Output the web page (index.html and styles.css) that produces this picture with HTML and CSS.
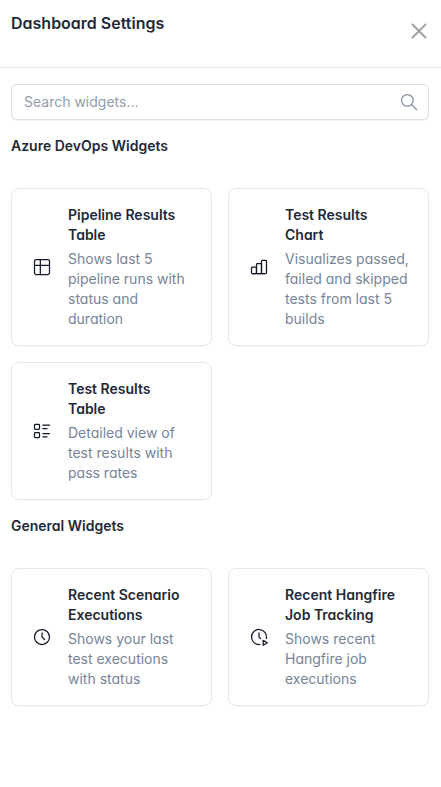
FILE: index.html
```html
<!DOCTYPE html>
<html lang="en">
<head>
<meta charset="utf-8">
<meta name="viewport" content="width=device-width, initial-scale=1">
<title>Dashboard Settings</title>
<link rel="stylesheet" href="styles.css">
</head>
<body>
<header class="header">
  <h1 class="title">Dashboard Settings</h1>
  <button class="close" type="button" aria-label="Close">
    <svg viewBox="0 0 16 16" width="16" height="16"><path d="M1.5 1.5l13 13M14.5 1.5l-13 13"/></svg>
  </button>
</header>
<main class="content">
  <div class="search">
    <input class="search-input" type="search" aria-label="Search widgets" placeholder="Search widgets...">
    <svg class="icon search-icon" viewBox="0 0 24 24"><path d="M3 10a7 7 0 1 0 14 0a7 7 0 1 0 -14 0"/><path d="M21 21l-6 -6"/></svg>
  </div>
  <section class="group">
    <h2 class="group-title">Azure DevOps Widgets</h2>
    <div class="cards">
      <button class="card" type="button">
        <svg class="icon" viewBox="0 0 24 24"><path d="M3 5a2 2 0 0 1 2 -2h14a2 2 0 0 1 2 2v14a2 2 0 0 1 -2 2h-14a2 2 0 0 1 -2 -2v-14z"/><path d="M3 10h18"/><path d="M10 3v18"/></svg>
        <span class="card-text"><strong class="card-title">Pipeline Results Table</strong><span class="card-desc">Shows last 5 pipeline runs with status and duration</span></span>
      </button>
      <button class="card" type="button">
        <svg class="icon" viewBox="0 0 24 24"><path d="M3 13a1 1 0 0 1 1 -1h4a1 1 0 0 1 1 1v6a1 1 0 0 1 -1 1h-4a1 1 0 0 1 -1 -1z"/><path d="M9 9a1 1 0 0 1 1 -1h4a1 1 0 0 1 1 1v10a1 1 0 0 1 -1 1h-4a1 1 0 0 1 -1 -1z"/><path d="M15 5a1 1 0 0 1 1 -1h4a1 1 0 0 1 1 1v14a1 1 0 0 1 -1 1h-4a1 1 0 0 1 -1 -1z"/><path d="M4 20h14"/></svg>
        <span class="card-text"><strong class="card-title">Test Results Chart</strong><span class="card-desc">Visualizes passed, failed and skipped tests from last 5 builds</span></span>
      </button>
      <button class="card" type="button">
        <svg class="icon" viewBox="0 0 24 24"><path d="M13 5h8"/><path d="M13 9h5"/><path d="M13 15h8"/><path d="M13 19h5"/><path d="M3 5a1 1 0 0 1 1 -1h4a1 1 0 0 1 1 1v4a1 1 0 0 1 -1 1h-4a1 1 0 0 1 -1 -1z"/><path d="M3 15a1 1 0 0 1 1 -1h4a1 1 0 0 1 1 1v4a1 1 0 0 1 -1 1h-4a1 1 0 0 1 -1 -1z"/></svg>
        <span class="card-text"><strong class="card-title">Test Results Table</strong><span class="card-desc">Detailed view of test results with pass rates</span></span>
      </button>
    </div>
  </section>
  <section class="group">
    <h2 class="group-title">General Widgets</h2>
    <div class="cards">
      <button class="card" type="button">
        <svg class="icon" viewBox="0 0 24 24"><path d="M3 12a9 9 0 1 0 18 0a9 9 0 0 0 -18 0"/><path d="M12 7v5l3 3"/></svg>
        <span class="card-text"><strong class="card-title">Recent Scenario Executions</strong><span class="card-desc">Shows your last test executions with status</span></span>
      </button>
      <button class="card" type="button">
        <svg class="icon" viewBox="0 0 24 24"><path d="M12 7v5l2 2"/><path d="M17 22l5 -3l-5 -3z"/><path d="M13.017 20.943a9 9 0 1 1 7.831 -7.292"/></svg>
        <span class="card-text"><strong class="card-title">Recent Hangfire Job Tracking</strong><span class="card-desc">Shows recent Hangfire job executions</span></span>
      </button>
    </div>
  </section>
</main>
</body>
</html>
```
FILE: styles.css
```css
* {
  box-sizing: border-box;
}

body {
  margin: 0;
  background: #fff;
  color: #1f2937;
  font: 14px/20px Inter, "Liberation Sans", sans-serif;
  font-feature-settings: "cv03", "cv04", "cv11";
}

.header {
  display: flex;
  justify-content: space-between;
  align-items: flex-start;
  height: 68px;
  padding: 11px 12px 0 11px;
  border-bottom: 1px solid #e3e5e8;
}

.title {
  margin: 0;
  font-size: 16px;
  line-height: 24px;
  font-weight: 600;
}

.close {
  display: flex;
  margin: 10px 0 0;
  padding: 2px;
  border: 0;
  background: none;
  color: #a1a3a7;
}

.close svg {
  fill: none;
  stroke: currentColor;
  stroke-width: 2;
  stroke-linecap: round;
}

.content {
  display: flex;
  flex-direction: column;
  gap: 16px;
  padding: 16px 12px 16px 11px;
}

.search {
  display: flex;
  align-items: center;
  padding-right: 9px;
  border: 1px solid #dcdfe4;
  border-radius: 6px;
  box-shadow: 0 1px 1px rgba(31, 41, 55, 0.06);
}

.search-input {
  flex: 1;
  min-width: 0;
  height: 34px;
  padding: 0 12px 2px;
  border: 0;
  outline: 0;
  background: none;
  color: inherit;
  font-family: inherit;
  font-size: 14px;
}

.search-input::placeholder {
  color: #929dab;
}

.icon {
  flex: none;
  width: 20px;
  height: 20px;
  fill: none;
  stroke: currentColor;
  stroke-width: 1.5;
  stroke-linecap: round;
  stroke-linejoin: round;
}

.search-icon {
  color: #8893a5;
}

.group-title {
  margin: 0 0 32px;
  font-size: 14px;
  line-height: 20px;
  font-weight: 600;
}

.cards {
  display: grid;
  grid-template-columns: repeat(2, minmax(0, 1fr));
  gap: 16px;
}

.card {
  display: flex;
  align-items: center;
  gap: 16px;
  padding: 16px 16px 16px 20px;
  border: 1px solid #e5e7eb;
  border-radius: 8px;
  background: #fff;
  box-shadow: 0 1px 1px rgba(31, 41, 55, 0.03);
  color: inherit;
  font: inherit;
  font-feature-settings: inherit;
  text-align: left;
}

.card .icon {
  color: #111827;
}

.card-text {
  display: flex;
  flex: 1;
  flex-direction: column;
  gap: 4px;
  min-width: 0;
}

.card-title {
  padding-right: 8px;
  font-weight: 600;
}

.card-desc {
  color: #76849a;
}
```
